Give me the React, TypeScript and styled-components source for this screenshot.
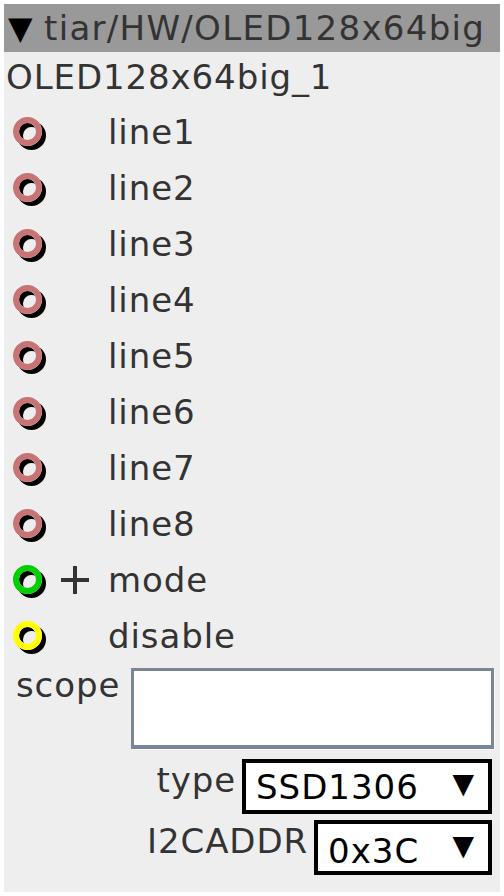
import React from 'react'
import styled, { createGlobalStyle } from 'styled-components'

type PinKind = 'out' | 'in' | 'flag'

const pinColors: Record<PinKind, string> = {
    out: '#c97474',
    in: '#00d000',
    flag: '#ffff00',
}

const pins: { name: string; kind: PinKind; plus?: boolean }[] = [
    { name: 'line1', kind: 'out' },
    { name: 'line2', kind: 'out' },
    { name: 'line3', kind: 'out' },
    { name: 'line4', kind: 'out' },
    { name: 'line5', kind: 'out' },
    { name: 'line6', kind: 'out' },
    { name: 'line7', kind: 'out' },
    { name: 'line8', kind: 'out' },
    { name: 'mode', kind: 'in', plus: true },
    { name: 'disable', kind: 'flag' },
]

const GlobalStyle = createGlobalStyle`
  html, body {
    margin: 0;
    background: #fff;
  }
  body {
    padding: 4px;
    font-family: "DejaVu Sans", Verdana, sans-serif;
  }
`

const App = () => {
    return (
        <>
            <GlobalStyle />
            <Panel>
                <Header>
                    <Caret>▼</Caret>tiar/HW/OLED128x64big
                </Header>
                <Title>OLED128x64big_1</Title>
                {pins.map(pin => (
                    <PinRow key={pin.name}>
                        <PinSlot>
                            <Pin color={pinColors[pin.kind]} />
                        </PinSlot>
                        <PlusSlot>
                            {pin.plus && (
                                <svg width="32" height="32" viewBox="0 0 32 32">
                                    <path d="M16 2v28M2 16h28" stroke="#333" strokeWidth="4" />
                                </svg>
                            )}
                        </PlusSlot>
                        <PinLabel>{pin.name}</PinLabel>
                    </PinRow>
                ))}
                <ScopeRow>
                    <FieldLabel>scope</FieldLabel>
                    <ScopeInput />
                </ScopeRow>
                <SelectRow>
                    <FieldLabel>type</FieldLabel>
                    <Select width={250}>
                        <SelectText>SSD1306</SelectText>
                        <Arrow>▼</Arrow>
                    </Select>
                </SelectRow>
                <SelectRow>
                    <FieldLabel>I2CADDR</FieldLabel>
                    <Select width={178} low>
                        <SelectText>0x3C</SelectText>
                        <Arrow>▼</Arrow>
                    </Select>
                </SelectRow>
            </Panel>
        </>
    )
}

const Panel = styled.div`
    width: 496px;
    height: 888px;
    background: #eeeeee;
    color: #333;
    font-size: 34px;
    letter-spacing: 0.9px;
    overflow: hidden;
`
const Header = styled.div`
    display: flex;
    align-items: center;
    height: 48px;
    line-height: 48px;
    background: #999999;
    padding-left: 4px;
    white-space: nowrap;
    letter-spacing: 1.3px;
    color: #333;
`
const Caret = styled.span`
    color: #000;
    font-size: 32px;
    letter-spacing: 0;
    width: 36px;
`
const Title = styled.div`
    height: 52px;
    line-height: 50px;
    padding-left: 2px;
`
const PinRow = styled.div`
    display: flex;
    align-items: center;
    height: 56px;
`
const PinSlot = styled.div`
    width: 50px;
    display: flex;
    justify-content: flex-start;
    padding-left: 9px;
    padding-bottom: 2px;
    box-sizing: border-box;
`
const Pin = styled.div<{ color: string }>`
    width: 29px;
    height: 29px;
    border-radius: 50%;
    border: 6px solid ${p => p.color};
    box-sizing: border-box;
    box-shadow: 4px 4px 0 #000, inset 4px 4px 0 #000;
`
const PlusSlot = styled.div`
    width: 54px;
    height: 32px;
    display: flex;
    align-items: center;
    padding-left: 5px;
    box-sizing: border-box;
`
const PinLabel = styled.span`
    line-height: 56px;
`
const FieldLabel = styled.span`
    line-height: 42px;
    white-space: nowrap;
`
const ScopeRow = styled.div`
    display: flex;
    align-items: flex-start;
    gap: 11px;
    padding-left: 12px;
    padding-right: 6px;
`
const ScopeInput = styled.div`
    flex: 1;
    margin-top: 4px;
    height: 81px;
    box-sizing: border-box;
    background: #fff;
    border: 3px solid #7a8896;
    border-bottom-width: 4px;
    box-shadow: 1px 1px 0 #fff;
`
const SelectRow = styled.div`
    display: flex;
    justify-content: flex-end;
    align-items: flex-start;
    gap: 6px;
    padding-right: 8px;
    margin-top: 10px;
    & + & {
        margin-top: 6px;
    }
`
const Select = styled.div<{ width: number; low?: boolean }>`
    width: ${p => p.width}px;
    height: 55px;
    box-sizing: border-box;
    border: 4px solid #000;
    background: #fff;
    color: #000;
    display: flex;
    align-items: flex-end;
    justify-content: space-between;
    padding: 0 14px ${p => (p.low ? 0 : 3)}px 10px;
`
const SelectText = styled.span`
    font-size: 34px;
    letter-spacing: 1px;
    line-height: 40px;
`
const Arrow = styled.span`
    align-self: center;
    font-size: 28px;
    letter-spacing: 0;
    margin-top: -4px;
`

export default App
